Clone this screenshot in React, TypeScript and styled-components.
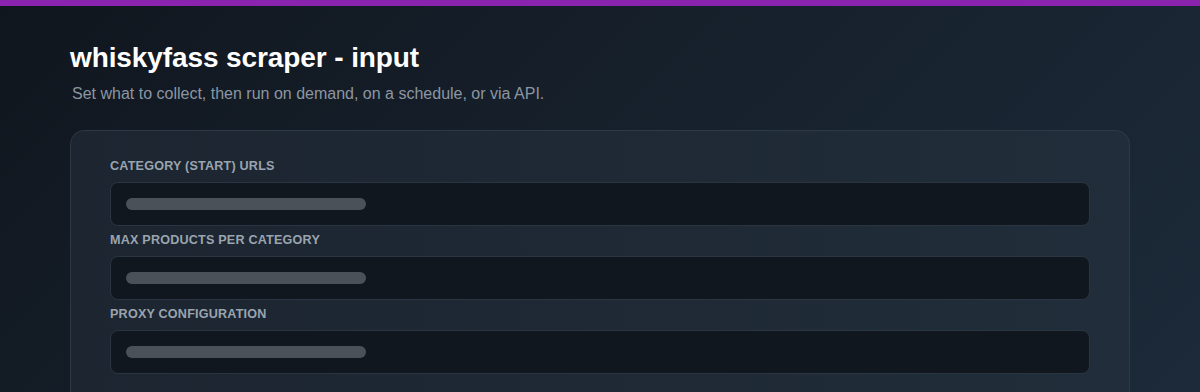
import React from "react";
import styled, { createGlobalStyle } from "styled-components";

const GlobalStyle = createGlobalStyle`
  html, body {
    margin: 0;
    padding: 0;
  }
  body {
    font-family: "Liberation Sans", Arial, sans-serif;
    background: #121a23;
  }
`;

const Page = styled.div`
  height: 392px;
  overflow: hidden;
  background: linear-gradient(135deg, #10161e 0%, #16202b 45%, #1c2a39 100%);
  border-top: 6px solid #8a23ad;
  box-sizing: border-box;
`;

const Content = styled.main`
  padding: 36px 70px 0;
  display: flex;
  flex-direction: column;
`;

const Title = styled.h1`
  margin: 0;
  font-size: 28px;
  line-height: 32px;
  font-weight: 700;
  color: #ffffff;
  letter-spacing: -0.1px;
`;

const Subtitle = styled.p`
  margin: 10px 0 0 2px;
  font-size: 16px;
  line-height: 20px;
  color: #8c96a2;
`;

const Card = styled.section`
  margin-top: 26px;
  padding: 27px 39px 40px;
  border: 1px solid #2d3946;
  border-radius: 14px;
  background: linear-gradient(90deg, #1c2530 0%, #212d3a 100%);
  display: flex;
  flex-direction: column;
  gap: 6px;
`;

const Field = styled.div`
  display: flex;
  flex-direction: column;
  gap: 8px;
`;

const Label = styled.label`
  font-size: 12.6px;
  line-height: 16px;
  font-weight: 700;
  letter-spacing: 0.2px;
  text-transform: uppercase;
  color: #9aa4af;
`;

const Input = styled.div`
  height: 44px;
  box-sizing: border-box;
  border: 1px solid #2a3541;
  border-radius: 8px;
  background: #10171f;
  display: flex;
  align-items: center;
  padding: 0 15px;
`;

const Placeholder = styled.span<{ $width: number }>`
  display: block;
  width: ${(p) => p.$width}px;
  height: 12px;
  border-radius: 6px;
  background: #4b5159;
`;

const fields = [
  "Category (start) URLs",
  "Max products per category",
  "Proxy configuration",
];

export default function App() {
  return (
    <>
      <GlobalStyle />
      <Page>
        <Content>
          <Title>whiskyfass scraper - input</Title>
          <Subtitle>
            Set what to collect, then run on demand, on a schedule, or via API.
          </Subtitle>
          <Card>
            {fields.map((f) => (
              <Field key={f}>
                <Label>{f}</Label>
                <Input>
                  <Placeholder $width={240} />
                </Input>
              </Field>
            ))}
          </Card>
        </Content>
      </Page>
    </>
  );
}
